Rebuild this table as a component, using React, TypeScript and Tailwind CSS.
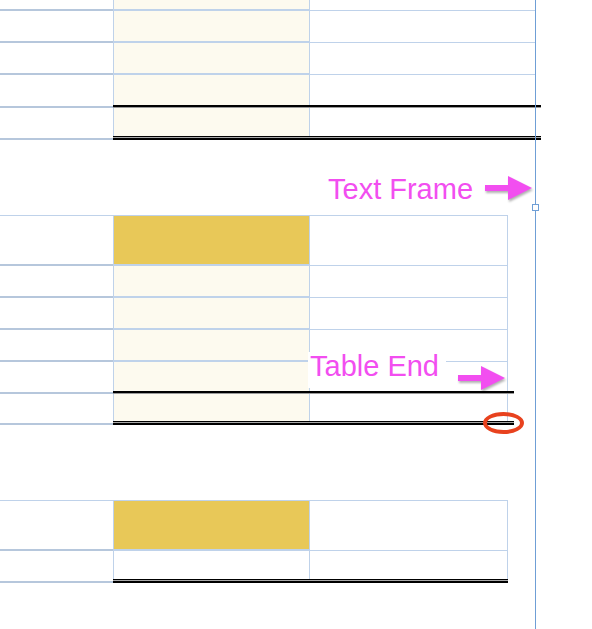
const line = "border-[#bfd2ea]"

type RowProps = {
  h: string
  mid?: string
  rule?: "single" | "double"
  ext?: boolean
  edge?: boolean
}

function Row({ h, mid = "bg-[#fdfaef]", rule, ext = true, edge = true }: RowProps) {
  const tail = ext ? "w-[calc(100%+6px)]" : "w-full"
  return (
    <div className={`flex ${h}`}>
      <div className="w-[113px] shrink-0 border-b-2 border-[#b6c7dc]" />
      <div className="flex flex-1 flex-col">
        <div className="flex flex-1">
          <div className={`w-[196px] shrink-0 border-l ${line} ${mid} ${rule ? "" : "border-b-2"}`} />
          <div className={`flex-1 border-l ${line} ${edge ? "border-r" : ""} ${rule ? "" : "border-b"}`} />
        </div>
        {rule === "single" && (
          <div className={`${tail} h-[3px] border-t-2 border-black bg-[#9a9a9a]`} />
        )}
        {rule === "double" && (
          <div className={`${tail} h-[4px] border-t border-b-2 border-black bg-[#a8a8a8]`} />
        )}
      </div>
    </div>
  )
}

const Arrow = () => (
  <svg width="50" height="28" viewBox="0 0 50 28" className="drop-shadow-[1px_2px_1px_rgba(0,0,0,0.3)]">
    <rect x="1" y="11" width="26" height="6" fill="#f24ef0" />
    <polygon points="24,2 48,14 24,26" fill="#f24ef0" />
  </svg>
)

export default function App() {
  return (
    <div className="relative h-[629px] w-[592px] overflow-hidden bg-white font-['Liberation_Sans',Arial,sans-serif]">
      {/* table one, cut at the top */}
      <div className="w-[535px]">
        <Row h="h-[11px]" edge={false} />
        <Row h="h-[32px]" edge={false} />
        <Row h="h-[32px]" edge={false} />
        <Row h="h-[33px]" edge={false} rule="single" />
        <Row h="h-[32px]" edge={false} rule="double" />
      </div>

      {/* table two */}
      <div className={`mt-[75px] w-[508px] border-t ${line}`}>
        <Row h="h-[50px]" mid="bg-[#e8c858]" />
        <Row h="h-[32px]" />
        <Row h="h-[32px]" />
        <Row h="h-[32px]" />
        <Row h="h-[32px]" rule="single" />
        <Row h="h-[31px]" rule="double" />
      </div>

      {/* table three */}
      <div className={`mt-[75px] w-[508px] border-t ${line}`}>
        <Row h="h-[50px]" mid="bg-[#e8c858]" />
        <Row h="h-[32px]" mid="bg-white" rule="double" ext={false} />
      </div>

      {/* text frame edge */}
      <div className="absolute left-[535px] top-0 bottom-0 w-px bg-[#6f9fd6]" />
      <div className="absolute left-[532px] top-[204px] h-[7px] w-[7px] border border-[#6f9fd6] bg-white" />

      {/* callouts */}
      <div className="absolute left-[328px] top-[175px] text-[29px] leading-none text-[#f24ef0]">
        Text Frame
      </div>
      <div className="absolute left-[484px] top-[174px]">
        <Arrow />
      </div>

      <div className="absolute left-[308px] top-[352px] h-[36px] w-[138px] bg-white pl-[2px] text-[29px] leading-none text-[#f24ef0]">
        Table End
      </div>
      <div className="absolute left-[457px] top-[364px]">
        <Arrow />
      </div>

      <div className="absolute left-[483px] top-[412px] h-[22px] w-[41px] rounded-[50%] border-4 border-[#e8421e]" />
    </div>
  )
}
